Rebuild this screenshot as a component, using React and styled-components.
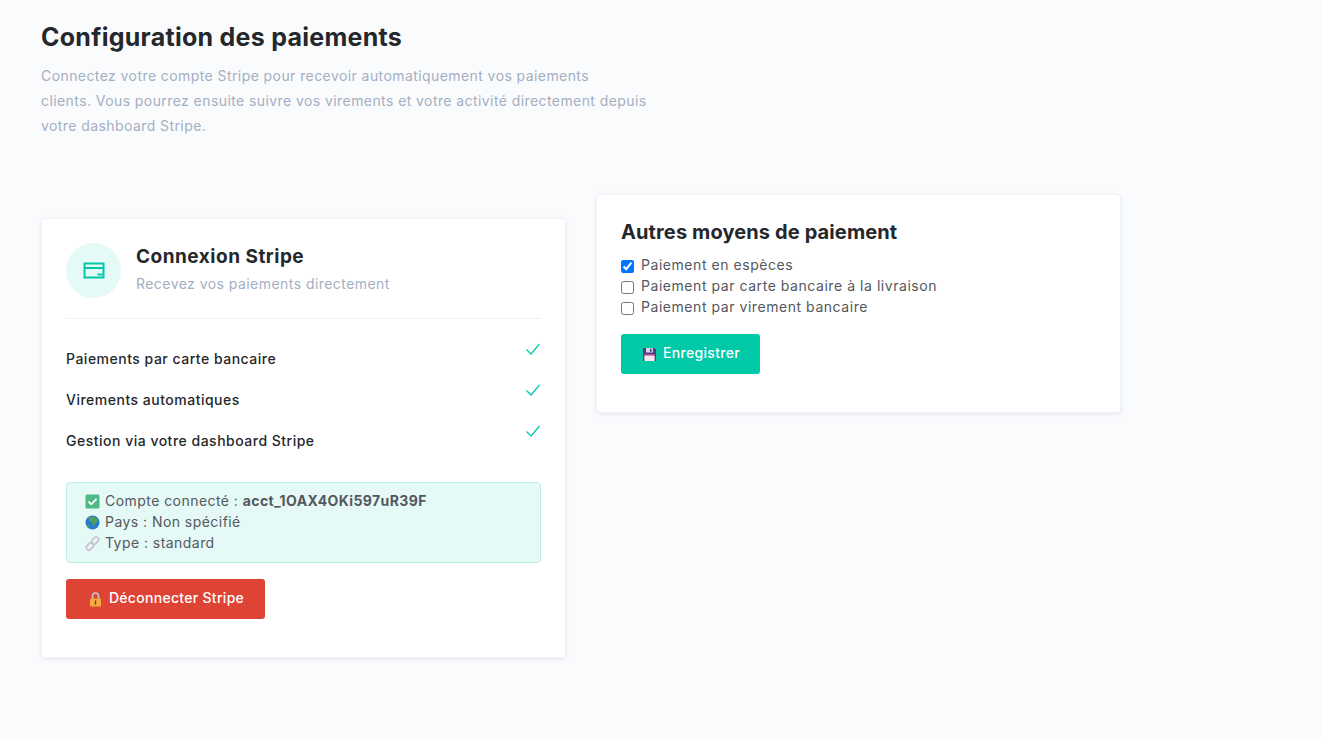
import React from 'react'
import styled, { createGlobalStyle } from 'styled-components'

const GlobalStyle = createGlobalStyle`
    html, body {
        margin: 0;
        background: #fafbfd;
    }
    body {
        font-family: Inter, "Open Sans", sans-serif;
        color: #25282b;
    }
`

const features = [
    'Paiements par carte bancaire',
    'Virements automatiques',
    'Gestion via votre dashboard Stripe',
]

const methods = [
    { label: 'Paiement en espèces', checked: true },
    { label: 'Paiement par carte bancaire à la livraison', checked: false },
    { label: 'Paiement par virement bancaire', checked: false },
]

const CardIcon = () => (
    <svg width="24" height="24" viewBox="0 0 24 24" fill="none" stroke="#00c9a7" strokeWidth="2">
        <rect x="2.5" y="4.5" width="19" height="14" />
        <path d="M2.5 9h19" />
        <path d="M15.5 15.5h5" />
    </svg>
)

const CheckIcon = () => (
    <svg width="16" height="16" viewBox="0 0 16 16" fill="none" stroke="#00c9a7" strokeWidth="1.2">
        <path d="M1.5 8.5 6 13 14.5 3" />
    </svg>
)

const CheckEmoji = () => (
    <Emoji viewBox="0 0 15 15" role="img" aria-label="✅">
        <rect x="0.5" y="0.5" width="14" height="14" rx="1.5" fill="#4fb985" />
        <path d="M3.5 7.5 6.3 10.3 11.5 4.8" fill="none" stroke="#fff" strokeWidth="1.8" />
    </Emoji>
)

const GlobeEmoji = () => (
    <Emoji viewBox="0 0 15 15" role="img" aria-label="🌍">
        <circle cx="7.5" cy="7.5" r="7" fill="#2a7bd0" />
        <path d="M3.5 2.5 8 1.5 12 3.5 13 6.5 10.5 8 9 11 7 9.5 7.5 7 4.5 6.5Z" fill="#4f9e55" />
        <path d="M1.5 9.5 4 10 5 13 2.8 12Z" fill="#4f9e55" />
    </Emoji>
)

const LinkEmoji = () => (
    <Emoji viewBox="0 0 15 15" role="img" aria-label="🔗">
        <g fill="none" stroke="#c9c1d3" strokeWidth="1.7">
            <rect x="7.6" y="0.6" width="5" height="8" rx="2.5" transform="rotate(42 10.1 4.6)" />
            <rect x="2.4" y="6.4" width="5" height="8" rx="2.5" transform="rotate(42 4.9 10.4)" />
        </g>
    </Emoji>
)

const LockEmoji = () => (
    <ButtonEmoji viewBox="0 0 15 15" role="img" aria-label="🔒">
        <path d="M4.5 7V4a3 3 0 0 1 6 0v3" fill="none" stroke="#c9c5c4" strokeWidth="1.6" />
        <rect x="2" y="6.5" width="11" height="8" rx="0.8" fill="#f7a93b" />
        <rect x="6.8" y="8.5" width="1.4" height="4" fill="#5a4030" />
    </ButtonEmoji>
)

const SaveEmoji = () => (
    <ButtonEmoji viewBox="0 0 15 15" role="img" aria-label="💾">
        <path d="M1 1h11.5L14 2.5V14H1Z" fill="#4b3a85" />
        <rect x="4" y="1" width="7" height="4.5" fill="#d9d4e4" />
        <rect x="8" y="1.8" width="1.6" height="3" fill="#4b3a85" />
        <rect x="2.5" y="7.5" width="10" height="6.5" fill="#f07ea0" />
        <rect x="2.5" y="9" width="10" height="5" fill="#efe9f2" />
    </ButtonEmoji>
)

const App = () => {
    return (
        <Page>
            <GlobalStyle />
            <Title>Configuration des paiements</Title>
            <Intro>
                Connectez votre compte Stripe pour recevoir automatiquement vos paiements<br />
                clients. Vous pourrez ensuite suivre vos virements et votre activité directement depuis<br />
                votre dashboard Stripe.
            </Intro>
            <Columns>
                <StripeCard>
                    <CardHeader>
                        <IconCircle><CardIcon /></IconCircle>
                        <HeaderText>
                            <CardTitle>Connexion Stripe</CardTitle>
                            <CardSubtitle>Recevez vos paiements directement</CardSubtitle>
                        </HeaderText>
                    </CardHeader>
                    <FeatureList>
                        {features.map((feature) => (
                            <Feature key={feature}>
                                <span>{feature}</span>
                                <CheckIcon />
                            </Feature>
                        ))}
                    </FeatureList>
                    <AccountBox>
                        <AccountRow><CheckEmoji />Compte connecté :&nbsp;<strong>acct_1OAX4OKi597uR39F</strong></AccountRow>
                        <AccountRow><GlobeEmoji />Pays : Non spécifié</AccountRow>
                        <AccountRow><LinkEmoji />Type : standard</AccountRow>
                    </AccountBox>
                    <Button $color="#de4436" $width={199}><LockEmoji />Déconnecter Stripe</Button>
                </StripeCard>
                <MethodsCard>
                    <MethodsTitle>Autres moyens de paiement</MethodsTitle>
                    <MethodList>
                        {methods.map((method) => (
                            <Method key={method.label}>
                                <input type="checkbox" defaultChecked={method.checked} />
                                {method.label}
                            </Method>
                        ))}
                    </MethodList>
                    <Button $color="#00c9a7" $width={139}><SaveEmoji />Enregistrer</Button>
                </MethodsCard>
            </Columns>
        </Page>
    )
}

const Page = styled.div`
    padding: 24px 41px 0;
    height: 739px;
    box-sizing: border-box;
    overflow: hidden;
`

const Title = styled.h1`
    margin: 0;
    font-size: 25px;
    line-height: 27px;
    font-weight: 700;
    letter-spacing: 0.27px;
`

const Intro = styled.p`
    margin: 12px 0 0;
    width: 620px;
    font-size: 14px;
    line-height: 25px;
    letter-spacing: 0.42px;
    color: #a3afc2;
`

const Columns = styled.div`
    display: flex;
    align-items: flex-start;
    gap: 30px;
    margin-top: 56px;
`

const Card = styled.section`
    width: 525px;
    box-sizing: border-box;
    background: #fff;
    border: 1px solid #f0f3f8;
    border-radius: 4px;
    box-shadow: 0 1px 4px rgba(30, 50, 90, 0.1);
    padding: 24px;
`

const StripeCard = styled(Card)`
    margin-top: 24px;
    height: 440px;
`

const MethodsCard = styled(Card)`
    height: 219px;
`

const CardHeader = styled.div`
    display: flex;
    align-items: center;
    gap: 15px;
    padding-bottom: 20px;
    border-bottom: 1px solid #edf0f6;
`

const HeaderText = styled.div`
    padding-bottom: 4px;
`

const IconCircle = styled.div`
    width: 55px;
    height: 55px;
    border-radius: 50%;
    background: #e5f9f6;
    display: flex;
    align-items: center;
    justify-content: center;
`

const CardTitle = styled.h2`
    margin: 0 0 4px;
    font-size: 19px;
    line-height: 25px;
    font-weight: 700;
    letter-spacing: 0.5px;
`

const CardSubtitle = styled.p`
    margin: 0;
    font-size: 14px;
    line-height: 21px;
    letter-spacing: 0.45px;
    color: #a3afc2;
`

const FeatureList = styled.div`
    margin-top: 20px;
    display: flex;
    flex-direction: column;
`

const Feature = styled.div`
    height: 41px;
    display: flex;
    justify-content: space-between;
    font-size: 14px;
    font-weight: 500;
    line-height: 21px;
    letter-spacing: 0.5px;
    span {
        padding-top: 9px;
    }
    svg {
        margin-top: 2px;
    }
`

const AccountBox = styled.div`
    margin-top: 20px;
    padding: 7px 18px 9px;
    border: 1px solid #b8f0e6;
    border-radius: 4px;
    background: #e5f9f6;
    font-size: 14px;
    line-height: 21px;
    letter-spacing: 0.45px;
    color: #54585e;
    strong {
        font-weight: 700;
        letter-spacing: 0.4px;
    }
`

const AccountRow = styled.div`
    display: flex;
    align-items: center;
`

const Emoji = styled.svg`
    width: 15px;
    height: 15px;
    flex: none;
    margin: 1px 5px 0 0;
`

const ButtonEmoji = styled(Emoji)`
    margin: 3px 6px 0 0;
`

const Button = styled.button`
    display: flex;
    align-items: center;
    justify-content: center;
    width: ${(props) => props.$width}px;
    height: 40px;
    margin-top: 16px;
    padding: 0 0 3px 1px;
    border: none;
    border-radius: 3px;
    background: ${(props) => props.$color};
    color: #fff;
    font-family: inherit;
    font-size: 14px;
    font-weight: 500;
    letter-spacing: 0.3px;
`

const MethodsTitle = styled.h2`
    margin: 0 0 8px;
    font-size: 20px;
    line-height: 27px;
    font-weight: 700;
    letter-spacing: 0.12px;
`

const MethodList = styled.div`
    display: flex;
    flex-direction: column;
    padding-bottom: 1px;
`

const Method = styled.label`
    display: flex;
    align-items: center;
    gap: 7px;
    height: 21px;
    font-size: 14px;
    letter-spacing: 0.55px;
    color: #54585e;
    input {
        margin: 3px 0 0;
        width: 13px;
        height: 13px;
    }
`

export default App
